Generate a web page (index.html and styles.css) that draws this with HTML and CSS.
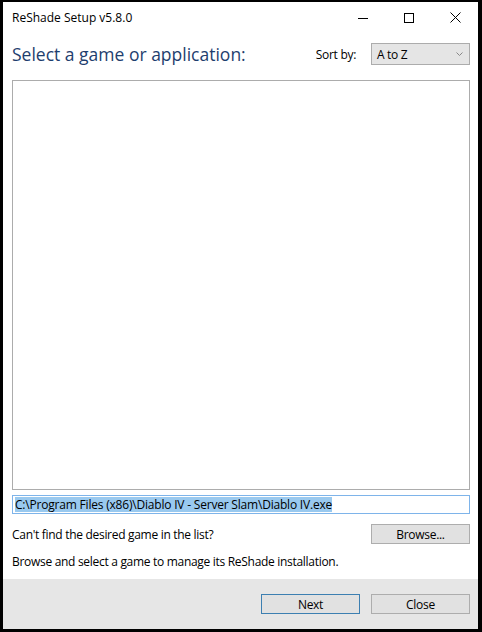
FILE: index.html
```html
<!DOCTYPE html>
<html lang="en">

<head>
	<meta charset="utf-8">
	<title>ReShade Setup v5.8.0</title>
	<link rel="stylesheet" href="styles.css">
</head>

<body>
	<div class="window">
		<div class="titlebar">
			<span class="title">ReShade Setup v5.8.0</span>
			<div class="controls">
				<span class="ctrl">
					<svg width="10" height="10" viewBox="0 0 10 10"><path d="M0 5.5h10" stroke="#000" stroke-width="1" /></svg>
				</span>
				<span class="ctrl">
					<svg width="10" height="10" viewBox="0 0 10 10"><rect x="0.5" y="0.5" width="9" height="9" fill="none" stroke="#000" stroke-width="1" /></svg>
				</span>
				<span class="ctrl">
					<svg width="11" height="11" viewBox="0 0 11 11"><path d="M0.5 0.5l10 10M10.5 0.5l-10 10" stroke="#000" stroke-width="1" /></svg>
				</span>
			</div>
		</div>

		<div class="content">
			<div class="header-row">
				<h1 class="heading">Select a game or application:</h1>
				<div class="sort">
					<span class="sort-label">Sort by:</span>
					<div class="combo">
						<span>A to Z</span>
						<svg width="7" height="4" viewBox="0 0 7 4"><path d="M0.5 0.5l3 3 3-3" fill="none" stroke="#888" stroke-width="1" /></svg>
					</div>
				</div>
			</div>

			<div class="game-list"></div>

			<div class="path-box">
				<span class="selected">C:\Program Files (x86)\Diablo IV - Server Slam\Diablo IV.exe</span>
			</div>

			<div class="browse-row">
				<span>Can't find the desired game in the list?</span>
				<button class="btn">Browse...</button>
			</div>

			<p class="hint">Browse and select a game to manage its ReShade installation.</p>
		</div>

		<div class="footer">
			<button class="btn btn-default">Next</button>
			<button class="btn">Close</button>
		</div>
	</div>
</body>

</html>
```

FILE: styles.css
```css
/* common css */
* {
	margin: 0;
	padding: 0;
	box-sizing: border-box;
}

body {
	font-family: 'Open Sans', 'Noto Sans', sans-serif;
	font-size: 12px;
	letter-spacing: -0.3px;
	color: #000;
	background-color: #000;
	width: 482px;
	height: 632px;
}

/* window frame */
.window {
	margin: 2px 4px 3px 3px;
	width: 475px;
	height: 627px;
	background-color: #fff;
	display: flex;
	flex-direction: column;
}

.titlebar {
	height: 31px;
	display: flex;
	align-items: center;
	justify-content: space-between;
	padding-left: 9px;
}

.title {
	font-size: 12px;
	letter-spacing: 0;
}

.controls {
	display: flex;
	height: 100%;
}

.ctrl {
	width: 46px;
	display: flex;
	align-items: center;
	justify-content: center;
}

/* main area */
.content {
	flex: 1;
	padding: 0 8px 0 9px;
	display: flex;
	flex-direction: column;
}

.header-row {
	display: flex;
	align-items: center;
	justify-content: space-between;
	height: 42px;
}

.heading {
	font-size: 17.5px;
	font-weight: normal;
	color: #1e3e6e;
	letter-spacing: 0;
}

.sort {
	display: flex;
	align-items: center;
}

.sort-label {
	margin-right: 15px;
}

.combo {
	width: 99px;
	height: 22px;
	background-color: #e5e5e5;
	border: 1px solid #acacac;
	display: flex;
	align-items: center;
	justify-content: space-between;
	padding: 0 6px 0 5px;
}

.game-list {
	margin-top: 5px;
	height: 410px;
	border: 1px solid #acacac;
	background-color: #fff;
}

.path-box {
	margin-top: 5px;
	height: 19px;
	border: 1px solid #7eb4ea;
	padding: 0 2px;
	display: flex;
	align-items: center;
	letter-spacing: -0.2px;
}

.selected {
	background-color: #99c9ef;
	line-height: 15px;
}

.browse-row {
	margin-top: 10px;
	display: flex;
	align-items: center;
	justify-content: space-between;
}

.hint {
	margin-top: 9px;
}

/* buttons */
.btn {
	font-family: inherit;
	font-size: 12px;
	letter-spacing: -0.3px;
	width: 99px;
	height: 20px;
	background-color: #e1e1e1;
	border: 1px solid #adadad;
	color: #000;
}

.btn-default {
	border-color: #3c7fb1;
}

/* footer */
.footer {
	height: 50px;
	background-color: #e6e6e6;
	display: flex;
	align-items: center;
	justify-content: flex-end;
	gap: 11px;
	padding-right: 8px;
}
```
